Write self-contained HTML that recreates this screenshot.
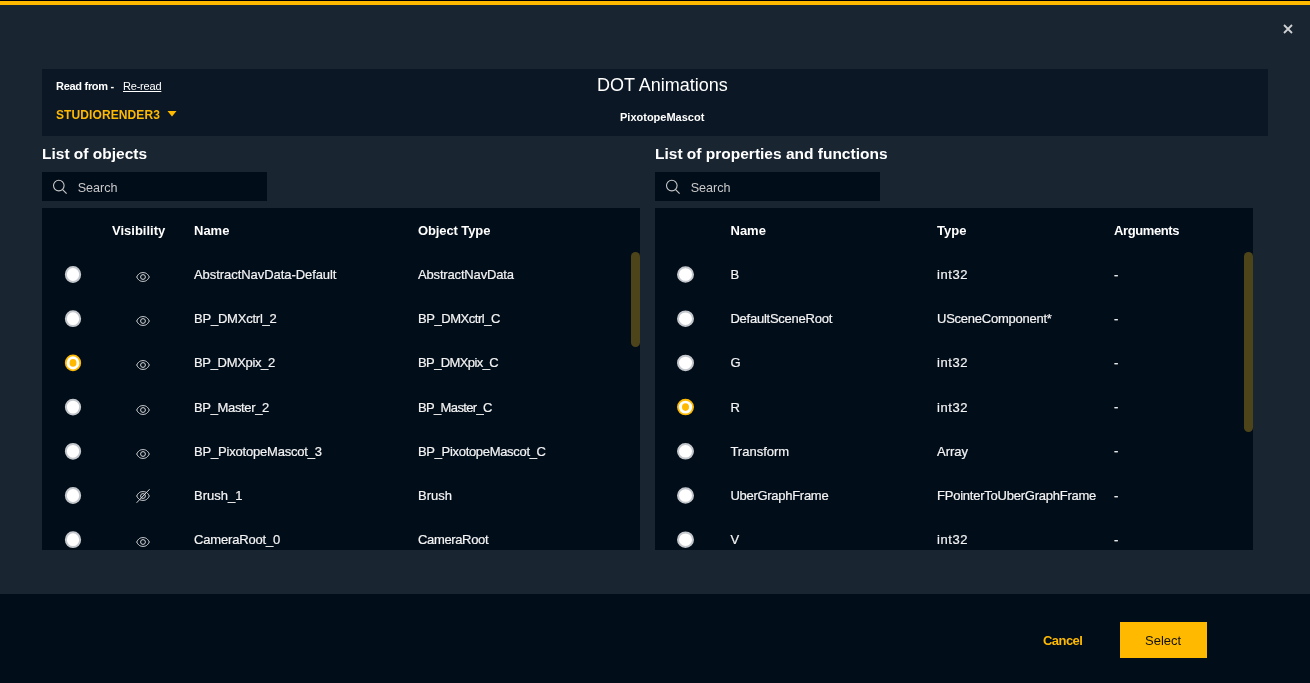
<!DOCTYPE html>
<html><head><meta charset="utf-8"><style>
*{margin:0;padding:0;box-sizing:border-box}
html,body{width:1310px;height:683px;overflow:hidden;background:#1a2532;font-family:"Liberation Sans",sans-serif;color:#fff}
#root{position:absolute;left:0;top:0;width:1310px;height:683px;will-change:transform}
.abs{position:absolute}
#topbar{position:absolute;left:0;top:0;width:1310px;height:5px;background:#ffba00;border-top:1px solid #000}
#close{position:absolute;left:1283.2px;top:24.1px;width:10px;height:10px}
#hdr{position:absolute;left:42px;top:69px;width:1226px;height:67px;background:#0b1724}
.t{position:absolute;font-size:13px;line-height:0;color:#f4f4f4;white-space:nowrap;-webkit-text-stroke:0.2px #f4f4f4}
.t::before{content:"";}
.h{position:absolute;font-size:13px;font-weight:bold;line-height:0;color:#fff;white-space:nowrap}
.search{position:absolute;top:172px;width:225px;height:29px;background:#020d1a}
.search svg{position:absolute;left:10px;top:7.3px}
.search span{position:absolute;left:35.7px;top:16px;line-height:0;font-size:12.6px;color:#c9c9c9}
.tbl{position:absolute;top:208px;width:598px;height:342px;background:#020d1a}
.sb{position:absolute;width:9px;background:#4d4519;border-radius:5px}
.rad{position:absolute;width:16px;height:16px;border-radius:50%;background:#fff;border:2px solid #c4c8cc}
.rad.sel{background:#fff;border:2.4px solid #ffba00}
.rad.sel::after{content:"";position:absolute;left:50%;top:50%;width:7px;height:7.4px;margin:-3.7px 0 0 -3.5px;border-radius:50%;background:#ffba00}
.eye{position:absolute}
#foot{position:absolute;left:0;top:594px;width:1310px;height:89px;background:#010d19}
</style></head><body><div id="root">
<div id="topbar"></div>
<svg id="close" width="10" height="10" viewBox="0 0 10 10"><path d="M1 1 L9 9 M9 1 L1 9" stroke="#cfd2d5" stroke-width="1.8"/></svg>
<div id="hdr"></div>
<div class="h" style="left:56px;top:86px;font-size:11px;letter-spacing:-0.29px">Read from -</div>
<div class="h" style="left:123px;top:86px;font-size:11px;font-weight:normal;text-decoration:underline;letter-spacing:-0.2px">Re-read</div>
<div class="h" style="left:56px;top:115px;font-size:12px;color:#ffba00;letter-spacing:0.1px">STUDIORENDER3</div>
<svg class="abs" style="left:167px;top:111px" width="10" height="6" viewBox="0 0 10 6"><path d="M0.5 0 L9.5 0 L5 5.5 Z" fill="#ffba00"/></svg>
<div class="h" style="left:597px;top:85px;font-size:18px;font-weight:normal">DOT Animations</div>
<div class="h" style="left:620px;top:117px;font-size:11px">PixotopeMascot</div>

<div class="h" style="left:42px;top:154px;font-size:15.5px">List of objects</div>
<div class="h" style="left:655px;top:154px;font-size:15.5px">List of properties and functions</div>
<div class="search" style="left:42px"><svg width="16" height="16" viewBox="0 0 16 16"><circle cx="6.8" cy="6.6" r="5.3" fill="none" stroke="#c8c8c8" stroke-width="1.1"/><path d="M10.6 10.6 L14.6 14.6" stroke="#c8c8c8" stroke-width="1.1"/></svg><span>Search</span></div>
<div class="search" style="left:655px"><svg width="16" height="16" viewBox="0 0 16 16"><circle cx="6.8" cy="6.6" r="5.3" fill="none" stroke="#c8c8c8" stroke-width="1.1"/><path d="M10.6 10.6 L14.6 14.6" stroke="#c8c8c8" stroke-width="1.1"/></svg><span>Search</span></div>

<div class="tbl" style="left:42px"></div>
<div class="tbl" style="left:655px"></div>
<div class="sb" style="left:631px;top:252px;height:95px"></div>
<div class="sb" style="left:1244px;top:252px;height:180px"></div>

<div class="h" style="left:112px;top:231px">Visibility</div>
<div class="h" style="left:194px;top:231px">Name</div>
<div class="h" style="left:418px;top:231px;letter-spacing:-0.1px">Object Type</div>
<div class="h" style="left:730.5px;top:231px">Name</div>
<div class="h" style="left:937px;top:231px">Type</div>
<div class="h" style="left:1114px;top:231px;letter-spacing:-0.4px">Arguments</div>

<svg class="abs" style="left:63px;top:265px" width="19" height="19"><ellipse cx="10.00" cy="9.50" rx="7.15" ry="7.40" fill="#fff" stroke="#c4c8cc" stroke-width="2"/></svg>
<svg class="eye" style="left:136px;top:272.0px" width="14" height="10" viewBox="0 0 14 10"><path d="M0.7 5 C2.5 1.4 4.6 0.6 7 0.6 C9.4 0.6 11.5 1.4 13.3 5 C11.5 8.6 9.4 9.4 7 9.4 C4.6 9.4 2.5 8.6 0.7 5 Z" fill="none" stroke="#d8d8d8" stroke-width="1"/><circle cx="7" cy="5" r="2.4" fill="none" stroke="#d8d8d8" stroke-width="1"/></svg>
<div class="t" style="left:194px;top:275.0px;letter-spacing:-0.059px">AbstractNavData-Default</div>
<div class="t" style="left:418px;top:275.0px;letter-spacing:-0.164px">AbstractNavData</div>
<svg class="abs" style="left:63px;top:309px" width="19" height="19"><ellipse cx="10.00" cy="9.70" rx="7.15" ry="7.40" fill="#fff" stroke="#c4c8cc" stroke-width="2"/></svg>
<svg class="eye" style="left:136px;top:316.2px" width="14" height="10" viewBox="0 0 14 10"><path d="M0.7 5 C2.5 1.4 4.6 0.6 7 0.6 C9.4 0.6 11.5 1.4 13.3 5 C11.5 8.6 9.4 9.4 7 9.4 C4.6 9.4 2.5 8.6 0.7 5 Z" fill="none" stroke="#d8d8d8" stroke-width="1"/><circle cx="7" cy="5" r="2.4" fill="none" stroke="#d8d8d8" stroke-width="1"/></svg>
<div class="t" style="left:194px;top:319.2px;letter-spacing:-0.218px">BP_DMXctrl_2</div>
<div class="t" style="left:418px;top:319.2px;letter-spacing:-0.455px">BP_DMXctrl_C</div>
<svg class="abs" style="left:63px;top:353px" width="19" height="19"><ellipse cx="10.00" cy="9.90" rx="7.25" ry="7.50" fill="#fff" stroke="#ffba00" stroke-width="1.8"/><ellipse cx="10.00" cy="9.90" rx="3.5" ry="3.8" fill="#ffba00"/></svg>
<svg class="eye" style="left:136px;top:360.4px" width="14" height="10" viewBox="0 0 14 10"><path d="M0.7 5 C2.5 1.4 4.6 0.6 7 0.6 C9.4 0.6 11.5 1.4 13.3 5 C11.5 8.6 9.4 9.4 7 9.4 C4.6 9.4 2.5 8.6 0.7 5 Z" fill="none" stroke="#d8d8d8" stroke-width="1"/><circle cx="7" cy="5" r="2.4" fill="none" stroke="#d8d8d8" stroke-width="1"/></svg>
<div class="t" style="left:194px;top:363.4px;letter-spacing:-0.33px">BP_DMXpix_2</div>
<div class="t" style="left:418px;top:363.4px;letter-spacing:-0.6px">BP_DMXpix_C</div>
<svg class="abs" style="left:63px;top:397px" width="19" height="19"><ellipse cx="10.00" cy="10.10" rx="7.15" ry="7.40" fill="#fff" stroke="#c4c8cc" stroke-width="2"/></svg>
<svg class="eye" style="left:136px;top:404.6px" width="14" height="10" viewBox="0 0 14 10"><path d="M0.7 5 C2.5 1.4 4.6 0.6 7 0.6 C9.4 0.6 11.5 1.4 13.3 5 C11.5 8.6 9.4 9.4 7 9.4 C4.6 9.4 2.5 8.6 0.7 5 Z" fill="none" stroke="#d8d8d8" stroke-width="1"/><circle cx="7" cy="5" r="2.4" fill="none" stroke="#d8d8d8" stroke-width="1"/></svg>
<div class="t" style="left:194px;top:407.6px;letter-spacing:-0.35px">BP_Master_2</div>
<div class="t" style="left:418px;top:407.6px;letter-spacing:-0.65px">BP_Master_C</div>
<svg class="abs" style="left:63px;top:441px" width="19" height="19"><ellipse cx="10.00" cy="10.30" rx="7.15" ry="7.40" fill="#fff" stroke="#c4c8cc" stroke-width="2"/></svg>
<svg class="eye" style="left:136px;top:448.8px" width="14" height="10" viewBox="0 0 14 10"><path d="M0.7 5 C2.5 1.4 4.6 0.6 7 0.6 C9.4 0.6 11.5 1.4 13.3 5 C11.5 8.6 9.4 9.4 7 9.4 C4.6 9.4 2.5 8.6 0.7 5 Z" fill="none" stroke="#d8d8d8" stroke-width="1"/><circle cx="7" cy="5" r="2.4" fill="none" stroke="#d8d8d8" stroke-width="1"/></svg>
<div class="t" style="left:194px;top:451.8px;letter-spacing:-0.194px">BP_PixotopeMascot_3</div>
<div class="t" style="left:418px;top:451.8px;letter-spacing:-0.317px">BP_PixotopeMascot_C</div>
<svg class="abs" style="left:63px;top:486px" width="19" height="19"><ellipse cx="10.00" cy="9.50" rx="7.15" ry="7.40" fill="#fff" stroke="#c4c8cc" stroke-width="2"/></svg>
<svg class="eye" style="left:135px;top:487.7px" width="16" height="16" viewBox="0 0 16 16"><path d="M1.7 8 C3.5 4.4 5.6 3.6 8 3.6 C10.4 3.6 12.5 4.4 14.3 8 C12.5 11.6 10.4 12.4 8 12.4 C5.6 12.4 3.5 11.6 1.7 8 Z" fill="none" stroke="#d8d8d8" stroke-width="1"/><circle cx="8" cy="8" r="2.4" fill="none" stroke="#d8d8d8" stroke-width="1"/><path d="M1.6 14.8 L14.6 1.2" stroke="#d8d8d8" stroke-width="1"/></svg>
<div class="t" style="left:194px;top:496.0px">Brush_1</div>
<div class="t" style="left:418px;top:496.0px">Brush</div>
<svg class="abs" style="left:63px;top:530px" width="19" height="19"><ellipse cx="10.00" cy="9.70" rx="7.15" ry="7.40" fill="#fff" stroke="#c4c8cc" stroke-width="2"/></svg>
<svg class="eye" style="left:136px;top:537.2px" width="14" height="10" viewBox="0 0 14 10"><path d="M0.7 5 C2.5 1.4 4.6 0.6 7 0.6 C9.4 0.6 11.5 1.4 13.3 5 C11.5 8.6 9.4 9.4 7 9.4 C4.6 9.4 2.5 8.6 0.7 5 Z" fill="none" stroke="#d8d8d8" stroke-width="1"/><circle cx="7" cy="5" r="2.4" fill="none" stroke="#d8d8d8" stroke-width="1"/></svg>
<div class="t" style="left:194px;top:540.2px;letter-spacing:-0.164px">CameraRoot_0</div>
<div class="t" style="left:418px;top:540.2px;letter-spacing:-0.356px">CameraRoot</div>
<svg class="abs" style="left:676px;top:265px" width="20" height="19"><ellipse cx="9.50" cy="9.50" rx="7.50" ry="7.25" fill="#fff" stroke="#c4c8cc" stroke-width="2"/></svg>
<div class="t" style="left:730.4px;top:275.0px">B</div>
<div class="t" style="left:937px;top:275.0px;letter-spacing:0.6px">int32</div>
<div class="t" style="left:1114px;top:274.5px">-</div>
<svg class="abs" style="left:676px;top:309px" width="20" height="19"><ellipse cx="9.50" cy="9.70" rx="7.50" ry="7.25" fill="#fff" stroke="#c4c8cc" stroke-width="2"/></svg>
<div class="t" style="left:730.4px;top:319.2px;letter-spacing:-0.24px">DefaultSceneRoot</div>
<div class="t" style="left:937px;top:319.2px;letter-spacing:-0.247px">USceneComponent*</div>
<div class="t" style="left:1114px;top:318.7px">-</div>
<svg class="abs" style="left:676px;top:353px" width="20" height="19"><ellipse cx="9.50" cy="9.90" rx="7.50" ry="7.25" fill="#fff" stroke="#c4c8cc" stroke-width="2"/></svg>
<div class="t" style="left:730.4px;top:363.4px">G</div>
<div class="t" style="left:937px;top:363.4px;letter-spacing:0.6px">int32</div>
<div class="t" style="left:1114px;top:362.9px">-</div>
<svg class="abs" style="left:676px;top:397px" width="20" height="19"><ellipse cx="9.50" cy="10.10" rx="7.60" ry="7.35" fill="#fff" stroke="#ffba00" stroke-width="1.8"/><ellipse cx="9.50" cy="10.10" rx="3.5" ry="3.8" fill="#ffba00"/></svg>
<div class="t" style="left:730.4px;top:407.6px">R</div>
<div class="t" style="left:937px;top:407.6px;letter-spacing:0.6px">int32</div>
<div class="t" style="left:1114px;top:407.1px">-</div>
<svg class="abs" style="left:676px;top:442px" width="20" height="19"><ellipse cx="9.50" cy="9.30" rx="7.50" ry="7.25" fill="#fff" stroke="#c4c8cc" stroke-width="2"/></svg>
<div class="t" style="left:730.4px;top:451.8px">Transform</div>
<div class="t" style="left:937px;top:451.8px">Array</div>
<div class="t" style="left:1114px;top:451.3px">-</div>
<svg class="abs" style="left:676px;top:486px" width="20" height="19"><ellipse cx="9.50" cy="9.50" rx="7.50" ry="7.25" fill="#fff" stroke="#c4c8cc" stroke-width="2"/></svg>
<div class="t" style="left:730.4px;top:496.0px;letter-spacing:-0.277px">UberGraphFrame</div>
<div class="t" style="left:937px;top:496.0px;letter-spacing:-0.235px">FPointerToUberGraphFrame</div>
<div class="t" style="left:1114px;top:495.5px">-</div>
<svg class="abs" style="left:676px;top:530px" width="20" height="19"><ellipse cx="9.50" cy="9.70" rx="7.50" ry="7.25" fill="#fff" stroke="#c4c8cc" stroke-width="2"/></svg>
<div class="t" style="left:730.4px;top:540.2px">V</div>
<div class="t" style="left:937px;top:540.2px;letter-spacing:0.6px">int32</div>
<div class="t" style="left:1114px;top:539.7px">-</div>

<div id="foot"></div>
<div class="h" style="left:1043px;top:641px;color:#ffba00;letter-spacing:-0.55px">Cancel</div>
<div class="abs" style="left:1120px;top:622px;width:87px;height:36px;background:#ffba00"></div>
<div class="h" style="left:1145px;top:641px;color:#111;font-weight:normal">Select</div>
</div></body></html>
